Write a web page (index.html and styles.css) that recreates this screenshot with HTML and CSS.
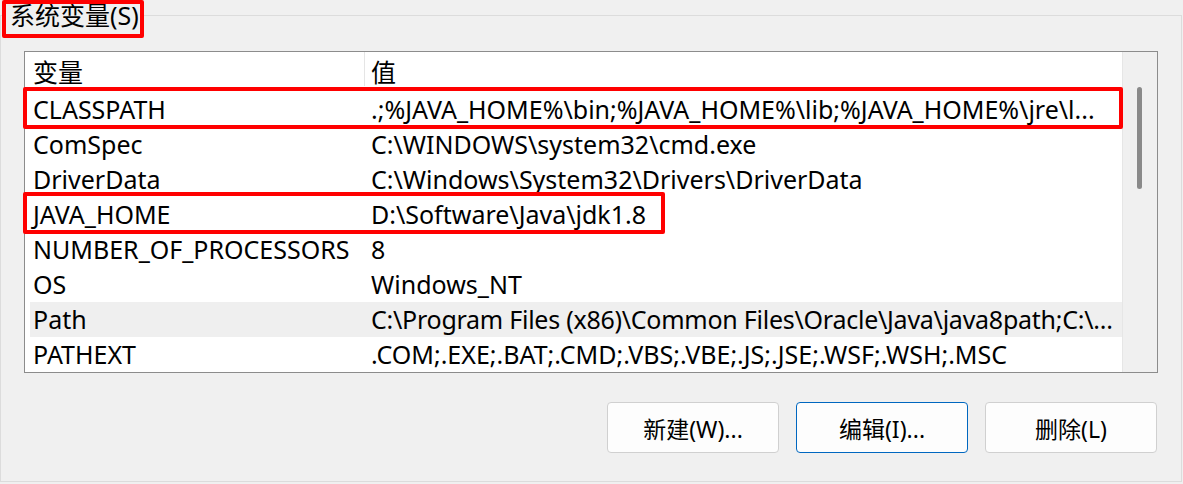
FILE: index.html
```html
<!DOCTYPE html>
<html lang="zh-CN">
<head>
    <meta charset="UTF-8">
    <meta name="viewport" content="width=device-width, initial-scale=1.0">
    <title>系统变量</title>
    <link rel="stylesheet" href="styles.css">
</head>
<body>
    <fieldset class="group">
        <legend class="group-title">系统变量(S)</legend>
        <div class="group-body">
            <div class="var-list">
                <div class="var-table">
                    <div class="var-head">
                        <span class="col-name">变量</span>
                        <span class="col-value">值</span>
                    </div>
                    <div class="var-row marked">
                        <span class="col-name">CLASSPATH</span>
                        <span class="col-value">.;%JAVA_HOME%\bin;%JAVA_HOME%\lib;%JAVA_HOME%\jre\l...</span>
                    </div>
                    <div class="var-row">
                        <span class="col-name">ComSpec</span>
                        <span class="col-value">C:\WINDOWS\system32\cmd.exe</span>
                    </div>
                    <div class="var-row">
                        <span class="col-name">DriverData</span>
                        <span class="col-value">C:\Windows\System32\Drivers\DriverData</span>
                    </div>
                    <div class="var-row marked marked-short">
                        <span class="col-name">JAVA_HOME</span>
                        <span class="col-value">D:\Software\Java\jdk1.8</span>
                    </div>
                    <div class="var-row">
                        <span class="col-name">NUMBER_OF_PROCESSORS</span>
                        <span class="col-value">8</span>
                    </div>
                    <div class="var-row">
                        <span class="col-name">OS</span>
                        <span class="col-value">Windows_NT</span>
                    </div>
                    <div class="var-row hover">
                        <span class="col-name">Path</span>
                        <span class="col-value tight">C:\Program Files (x86)\Common Files\Oracle\Java\java8path;C:\...</span>
                    </div>
                    <div class="var-row">
                        <span class="col-name">PATHEXT</span>
                        <span class="col-value">.COM;.EXE;.BAT;.CMD;.VBS;.VBE;.JS;.JSE;.WSF;.WSH;.MSC</span>
                    </div>
                </div>
                <div class="scrollbar">
                    <div class="scroll-thumb"></div>
                </div>
            </div>

            <div class="actions">
                <button class="btn">新建(W)...</button>
                <button class="btn btn-default">编辑(I)...</button>
                <button class="btn">删除(L)</button>
            </div>
        </div>
    </fieldset>
</body>
</html>
```

FILE: styles.css
```css
:root {
    --bg: #f0f0f0;
    --line: #dcdcdc;
    --list-border: #8c8c8c;
    --mark: #ff0000;
    --accent: #0067c0;
}

* {
    box-sizing: border-box;
}

body {
    margin: 0;
    background: var(--bg);
    color: #000;
    font-family: "Noto Sans", "Noto Sans CJK SC", sans-serif;
    font-size: 25px;
}

.group {
    width: 1182px;
    margin: 0;
    padding: 0;
    border: 1px solid var(--line);
    min-width: 0;
}

.group-title {
    position: relative;
    margin-left: 4px;
    padding: 0 5px;
    line-height: 30px;
}

/* red annotation box */
.group-title::after {
    content: '';
    position: absolute;
    left: -3px;
    right: 0;
    top: 0;
    bottom: -8px;
    border: 4px solid var(--mark);
    border-radius: 2px;
}

.group-body {
    padding: 21px 23px 28px 23px;
}

.var-list {
    display: flex;
    height: 322px;
    background: #fff;
    border: 1px solid var(--list-border);
}

.var-table {
    flex: 1;
    min-width: 0;
}

.var-head,
.var-row {
    display: grid;
    grid-template-columns: 334px 1fr;
    margin-left: 5px;
    white-space: nowrap;
}

.var-head {
    height: 40px;
    line-height: 40px;
}

.var-head .col-value {
    background: linear-gradient(#e5e5e5, #e5e5e5) no-repeat left top / 1px 34px;
}

.var-row {
    height: 35px;
    line-height: 35px;
}

.col-name {
    padding-left: 3px;
    overflow: hidden;
}

.col-value {
    padding-left: 7px;
    overflow: hidden;
}

.col-value.tight {
    letter-spacing: -0.25px;
}

.var-row.hover {
    background: #efefef;
}

.var-row.marked {
    position: relative;
}

.var-row.marked::after {
    content: '';
    position: absolute;
    left: -7px;
    right: -1px;
    top: -5px;
    bottom: -2px;
    border: 4px solid var(--mark);
    border-radius: 2px;
}

.var-row.marked-short::after {
    right: 457px;
}

.scrollbar {
    width: 35px;
    background: #f0f0f0;
    border-left: 1px solid #e6e6e6;
}

.scroll-thumb {
    width: 5px;
    height: 102px;
    margin: 35px 0 0 14px;
    background: #8a8a8a;
    border-radius: 3px;
}

.actions {
    display: flex;
    justify-content: flex-end;
    gap: 17px;
    margin-top: 29px;
    padding-right: 1px;
}

.btn {
    width: 172px;
    height: 51px;
    background: #fdfdfd;
    border: 1px solid #d0d0d0;
    border-radius: 4px;
    font-family: inherit;
    font-size: 23px;
    color: #000;
}

.btn-default {
    border-color: var(--accent);
}
```
